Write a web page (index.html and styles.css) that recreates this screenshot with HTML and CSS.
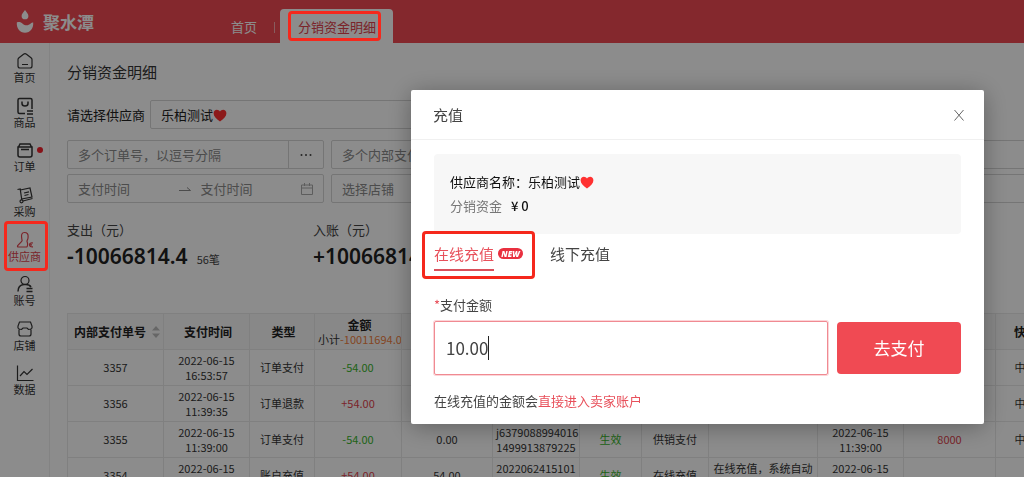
FILE: index.html
```html
<!DOCTYPE html>
<html lang="zh-CN">
<head>
<meta charset="utf-8">
<title>分销资金明细</title>
<link rel="stylesheet" href="styles.css">
</head>
<body>
<svg class="defs" aria-hidden="true">
  <symbol id="heart" viewBox="0 0 14 13"><path d="M7 12.4C3.2 9.6.6 7.200.6 4.200.6 2.200 2.100.8 3.900.8 5.200.8 6.300 1.500 7 2.600 7.700 1.500 8.800.8 10.100.8c1.800 0 3.300 1.400 3.300 3.400 0 3-2.600 5.400-6.400 8.200z" fill="#ff3131"/></symbol>
</svg>

<header class="topbar">
  <div class="brand">
    <svg class="brand-logo" viewBox="0 0 18 24" aria-hidden="true">
      <path d="M9 0c1.800 2.600 3.400 4.100 3.400 5.900a3.400 3.400 0 0 1-6.800 0C5.600 4.100 7.200 2.600 9 0z"/>
      <path d="M.8 12.500c2.200-.8 4.300-.3 5.900 1.200 2.400 2.200 5.600 2.100 8-.2.8-.8 1.600-1 2.500-.9.500 5.600-3 10.200-8.200 10.200S.4 18.200.8 12.500z"/>
    </svg>
    <span>聚水潭</span>
  </div>
  <nav class="tabs">
    <a href="#" class="tab">首页</a>
    <a href="#" class="tab tab-active">分销资金明细</a>
  </nav>
</header>

<div class="body">
  <nav class="sidebar">
    <a href="#" class="side-item"><svg viewBox="0 0 18 18"><path d="M2 7.500Q2 6.500 3 5.700L7.500 2.200Q9 1.200 10.500 2.200L15 5.700Q16 6.500 16 7.500V14Q16 16 14 16H4Q2 16 2 14zM6 12.500h6"/></svg>首页</a>
    <a href="#" class="side-item"><svg viewBox="0 0 18 18"><path d="M9 16.500H3.500Q2 16.500 2 15V3Q2 1.500 3.500 1.500h11Q16 1.500 16 3v9M6 4.500v2q0 2.500 3 2.500t3-2.500v-2M11 14h6M11 17h6" stroke-width="1.500"/></svg>商品</a>
    <a href="#" class="side-item side-dot"><svg viewBox="0 0 18 18"><path d="M2 6h14v8q0 2-2 2H4q-2 0-2-2zM2.500 6l1.500-3h10l1.500 3M5 8.500h8" stroke-width="1.500"/></svg>订单</a>
    <a href="#" class="side-item"><svg viewBox="0 0 18 18"><path d="M1.500 3.500l2.700-.5L5.800 14M7 15L16.500 12.500M4.300 4L14 2l2 9-10.500 2M8 7l5-1.200M8.500 9.500l4-1"/><circle cx="5.500" cy="15.300" r="1.500"/></svg>采购</a>
    <a href="#" class="side-item side-active"><svg viewBox="0 0 18 18"><path d="M11 16H2.500q-1.500 0-.8-1.500l4-4.200Q6.500 9.500 5.800 8 4.500 1.500 8.500 1.500t3.600 4.500q0 2-.9 3.300-.5 1 .3 2.700.5 2-.5 4M17 12q-3.500-.5-3.500 1.800T17 15.800M13.500 13.800H16"/></svg>供应商</a>
    <a href="#" class="side-item"><svg viewBox="0 0 18 18"><circle cx="9" cy="5.500" r="4"/><path d="M2 16.500q0-6.500 6-7h2q3.500 0 5 2.500M10.500 13.500h6M10.500 16.500h6" stroke-width="1.500"/></svg>账号</a>
    <a href="#" class="side-item"><svg viewBox="0 0 18 18"><path d="M3.500 2h11l1.500 4v2q-1 1.500-3.500 1.500L11 8H7L5.500 9.500Q3 9.500 2 8V6zM3 9.500V14q0 2 2 2h8q2 0 2-2V9.500"/></svg>店铺</a>
    <a href="#" class="side-item"><svg viewBox="0 0 18 18"><path d="M1.500 1.500v15H17.500M4 12l4-4.500 3 3 5.500-5.500"/></svg>数据</a>
  </nav>

  <main class="content">
    <h1 class="page-title">分销资金明细</h1>
    <div class="supplier-row">
      <label for="supplier">请选择供应商</label>
      <button type="button" id="supplier" class="field supplier">乐柏测试<svg class="heart"><use href="#heart"/></svg></button>
    </div>

    <div class="filters">
      <div class="field group">
        <input type="text" aria-label="订单号" placeholder="多个订单号，以逗号分隔">
        <button type="button" class="more" aria-label="更多"><svg viewBox="0 0 12 4"><circle cx="1.500" cy="2" r="1"/><circle cx="6" cy="2" r="1"/><circle cx="10.500" cy="2" r="1"/></svg></button>
      </div>
      <div class="field group">
        <input type="text" aria-label="内部支付单号" placeholder="多个内部支付单号">
      </div>
      <div class="field group"><input type="text" aria-label="备注"></div>
      <div class="field group"><input type="text" aria-label="单号"></div>
      <div class="field group range">
        <input type="text" aria-label="开始支付时间" placeholder="支付时间">
        <svg class="arrow" viewBox="0 0 12 12"><path d="M0 7.500h11.500L8 4.500"/></svg>
        <input type="text" aria-label="结束支付时间" placeholder="支付时间">
        <svg class="calendar" viewBox="0 0 12 12"><path d="M.5 2h11v9.500H.5zM.5 5h11M3.500 0v3M8.500 0v3"/></svg>
      </div>
      <select class="field" aria-label="店铺"><option>选择店铺</option></select>
      <select class="field" aria-label="类型"><option></option></select>
      <select class="field" aria-label="状态"><option></option></select>
    </div>

    <div class="stats">
      <div>
        <div class="stat-name">支出（元）</div>
        <div class="stat-value">-10066814.4<small>56笔</small></div>
      </div>
      <div>
        <div class="stat-name">入账（元）</div>
        <div class="stat-value">+10066814.4</div>
      </div>
    </div>

    <table class="ledger">
      <colgroup><col class="w-id"><col class="w-date"><col class="w-type"><col class="w-sum"><col class="w-left"><col class="w-serial"><col class="w-state"><col class="w-kind"><col class="w-note"><col class="w-date"><col class="w-order"><col class="w-ship"></colgroup>
      <thead>
        <tr><th>内部支付单号<svg class="sort" viewBox="0 0 8 12"><path d="M4 0l4 4.500H0zM4 12L0 7.500h8z"/></svg></th><th>支付时间</th><th>类型</th><th class="sum">金额<div>小计<span>-10011694.00</span></div></th><th></th><th></th><th></th><th></th><th></th><th></th><th></th><th>快递公司</th></tr>
      </thead>
      <tbody>
        <tr><td>3357</td><td>2022-06-15 16:53:57</td><td>订单支付</td><td class="out">-54.00</td><td></td><td></td><td></td><td></td><td></td><td></td><td></td><td>中通快递</td></tr>
        <tr><td>3356</td><td>2022-06-15 11:39:35</td><td>订单退款</td><td class="in">+54.00</td><td></td><td></td><td></td><td></td><td></td><td></td><td></td><td>中通快递</td></tr>
        <tr><td>3355</td><td>2022-06-15 11:39:00</td><td>订单支付</td><td class="out">-54.00</td><td>0.00</td><td>j6379088994016<br>1499913879225</td><td class="out">生效</td><td>供销支付</td><td></td><td>2022-06-15 11:39:00</td><td class="in">8000</td><td>中通快递</td></tr>
        <tr><td>3354</td><td>2022-06-15 11:38:30</td><td>账户充值</td><td class="in">+54.00</td><td>54.00</td><td>2022062415101<br>1499913879</td><td class="out">生效</td><td>在线充值</td><td>在线充值，系统自动审核</td><td>2022-06-15 11:38:30</td><td></td><td></td></tr>
      </tbody>
    </table>
  </main>
</div>

<div class="overlay">
  <section class="modal" role="dialog" aria-labelledby="modal-title">
    <header class="modal-head">
      <h2 id="modal-title">充值</h2>
      <button type="button" class="close" aria-label="关闭"><svg viewBox="0 0 12 12"><path d="M1.500 1l9 10.500M10.500 1l-9 10.500"/></svg></button>
    </header>
    <div class="modal-body">
      <div class="summary">
        <div>供应商名称：乐柏测试<svg class="heart"><use href="#heart"/></svg></div>
        <div class="balance">分销资金<b>¥ 0</b></div>
      </div>
      <div class="pay-tabs">
        <button type="button" class="pay-tab pay-active"><span>在线充值</span><i class="new">NEW</i></button>
        <button type="button" class="pay-tab"><span>线下充值</span></button>
      </div>
      <label class="amount-label" for="amount"><em>*</em>支付金额</label>
      <div class="pay-row">
        <div class="amount"><input id="amount" type="text" value="10.00" size="4"><span class="caret"></span></div>
        <button type="button" class="pay">去支付</button>
      </div>
      <p class="hint">在线充值的金额会<strong>直接进入卖家账户</strong></p>
    </div>
  </section>
</div>
<div class="mark mark-tab"></div>
<div class="mark mark-side"></div>
</body>
</html>
```
FILE: styles.css
```css
*, *::before, *::after { box-sizing: border-box; }
body {
  margin: 0;
  height: 100vh;
  overflow: hidden;
  display: flex;
  flex-direction: column;
  background: #fff;
  color: #333;
  font: 13px/20px "Noto Sans CJK SC", "Noto Sans", sans-serif;
}
button, input, select { font: inherit; color: inherit; margin: 0; padding: 0; border: 0; background: none; outline: 0; appearance: none; }
button { text-align: left; }
a { color: inherit; text-decoration: none; }
svg { fill: none; stroke: currentColor; }
.defs { position: absolute; width: 0; height: 0; }
.heart { width: 14px; height: 13px; stroke: none; vertical-align: -2px; }

.topbar { flex: none; height: 43px; display: flex; align-items: stretch; background: #f04a53; color: #fff; }
.brand { width: 213px; padding-left: 16px; display: flex; align-items: center; gap: 9px; font-size: 17px; font-weight: 700; }
.brand-logo { width: 18px; height: 24px; fill: #fff; stroke: none; }
.tabs { display: flex; align-items: flex-end; }
.tab { position: relative; height: 34px; padding: 0 17px 0 18px; line-height: 36px; }
.tab:first-child { padding-right: 23px; }
.tab:first-child::after { content: ""; position: absolute; right: 5px; top: 13px; width: 1px; height: 11px; background: #f8a8ac; }
.tab-active { background: #fff; color: #e0434d; border-radius: 4px 4px 0 0; }

.body { flex: 1; min-height: 0; display: flex; }
.sidebar { flex: none; width: 49px; height: 357px; margin-top: 6px; display: grid; grid-auto-rows: 1fr; }
.side-item { position: relative; display: flex; flex-direction: column; align-items: center; padding-top: 3px; font-size: 11px; line-height: 15px; }
.side-item svg { width: 18px; height: 18px; stroke-width: 1.2; }
.side-active { color: #e0434d; }
.side-dot::after { content: ""; position: absolute; left: 37px; top: 9px; width: 6px; height: 6px; border-radius: 50%; background: #f5222d; }

.content { flex: 1; min-width: 0; padding: 18px 0 0 17px; border-left: 1px solid #eee; overflow: hidden; }
.page-title { margin: 0; font-size: 15px; font-weight: 400; line-height: 22px; }
.supplier-row { margin-top: 17px; display: flex; align-items: center; gap: 5px; }
.supplier-row label { color: #222; }
.field { height: 29px; border: 1px solid #d5d5d5; border-radius: 2px; }
.supplier { width: 420px; padding: 0 10px; color: #222; }
.filters { margin-top: 11px; display: grid; grid-template-columns: repeat(4, 257px); gap: 5px 7px; color: #8a8a8a; }
.group { display: flex; align-items: center; }
.group input { flex: 1; min-width: 0; padding-left: 10px; }
.group input::placeholder { color: #8a8a8a; opacity: 1; }
.filters select { padding-left: 10px; }
.more { width: 35px; height: 27px; display: flex; align-items: center; justify-content: center; border-left: 1px solid #d5d5d5; color: #444; }
.more svg { width: 12px; height: 4px; fill: currentColor; stroke: none; }
.range { padding-right: 10px; }
.arrow { width: 12px; height: 12px; }
.calendar { width: 12px; height: 12px; color: #aaa; }
.stats { margin-top: 17px; display: grid; grid-template-columns: 246px 1fr; line-height: 20px; color: #444; }
.stat-value { font-family: "Noto Sans", "Noto Sans CJK SC", sans-serif; font-size: 21px; font-weight: 600; line-height: 32px; color: #222; }
.stat-value small { margin-left: 9px; font-family: "Noto Sans CJK SC", sans-serif; font-size: 11px; font-weight: 400; color: #444; }

.ledger { margin-top: 38px; width: 1010px; table-layout: fixed; border-collapse: collapse; font-size: 11px; line-height: 15px; text-align: center; }
.ledger th, .ledger td { height: 36px; padding: 2px 3px; border: 1px solid #e9e9e9; }
.ledger th { padding: 0 0 0 3px; background: #f8f8f8; color: #222; font-size: 12px; font-weight: 700; white-space: nowrap; overflow: hidden; }
.ledger .sum div { text-align: left; font-size: 11px; font-weight: 400; color: #333; overflow: hidden; }
.sum span { color: #f08040; }
.out { color: #39b52c; }
.in { color: #e0434d; }
.sort { width: 8px; height: 12px; margin-left: 6px; fill: #bbb; stroke: none; vertical-align: -1px; }
.w-id { width: 96px; } .w-date { width: 86px; } .w-type { width: 65px; } .w-sum { width: 87px; }
.w-left { width: 91px; } .w-serial { width: 87px; } .w-state { width: 62px; } .w-kind { width: 67px; }
.w-note { width: 109px; } .w-order { width: 92px; } .w-ship { width: 82px; }

.overlay { position: fixed; inset: 0; padding: 90px 40px 0; display: flex; justify-content: flex-end; align-items: flex-start; background: rgba(0, 0, 0, .45); }
.modal { width: 100%; max-width: 573px; background: #fff; border-radius: 2px; box-shadow: 0 3px 24px rgba(0, 0, 0, .32); }
.modal-head { height: 50px; padding: 0 19px 0 22px; display: flex; align-items: center; justify-content: space-between; border-bottom: 1px solid #f0f0f0; }
.modal-head h2 { margin: 0; font-size: 15px; font-weight: 400; color: #444; }
.close { width: 12px; height: 12px; color: #666; }
.close svg { display: block; }
.modal-body { padding: 14px 23px 13px; }
.summary { height: 80px; padding: 18px 16px; border-radius: 4px; background: #f7f7f7; color: #111; }
.summary div { height: 24px; }
.summary .balance { color: #777; }
.balance b { margin-left: 9px; color: #111; font-weight: 500; }
.pay-tabs { display: flex; gap: 27px; margin-top: 9px; }
.pay-tab { position: relative; display: flex; align-items: flex-start; gap: 4px; font-size: 15px; line-height: 22px; color: #444; }
.pay-tab span { height: 28px; }
.pay-active span { color: #e8505b; border-bottom: 2px solid #d9505b; }
.pay-active::after { content: ""; position: absolute; left: -12px; right: -12px; top: -12px; height: 48px; border: 3px solid #f5281c; border-radius: 4px; }
.new { margin-top: 5px; width: 25px; height: 11px; border-radius: 6px; background: #e9303f; color: #fff; font: italic 800 8px/11px "Open Sans", sans-serif; text-align: center; }
.amount-label { display: block; margin-top: 24px; color: #444; }
.amount-label em { color: #e8505b; font-style: normal; }
.pay-row { margin-top: 6px; display: flex; align-items: center; gap: 9px; }
.amount { flex: 1; height: 54px; padding-left: 11px; display: flex; align-items: center; border: 1px solid #f08a92; border-radius: 2px; box-shadow: 0 0 0 1px #fbd5d8; font-size: 17px; color: #444; }
.amount input { width: 42px; }
.caret { width: 1px; height: 24px; background: #222; }
.pay { width: 124px; height: 52px; border-radius: 4px; background: #f04a53; color: #fff; font-size: 17px; text-align: center; }
.hint { margin: 16px 0 0; color: #444; }
.hint strong { color: #e8505b; font-weight: 400; }
.mark { position: absolute; z-index: 2; border: 3px solid #f5281c; border-radius: 4px; pointer-events: none; }
.mark-tab { left: 288px; top: 11px; width: 93px; height: 30px; }
.mark-side { left: 4px; top: 221px; width: 44px; height: 50px; }
```
